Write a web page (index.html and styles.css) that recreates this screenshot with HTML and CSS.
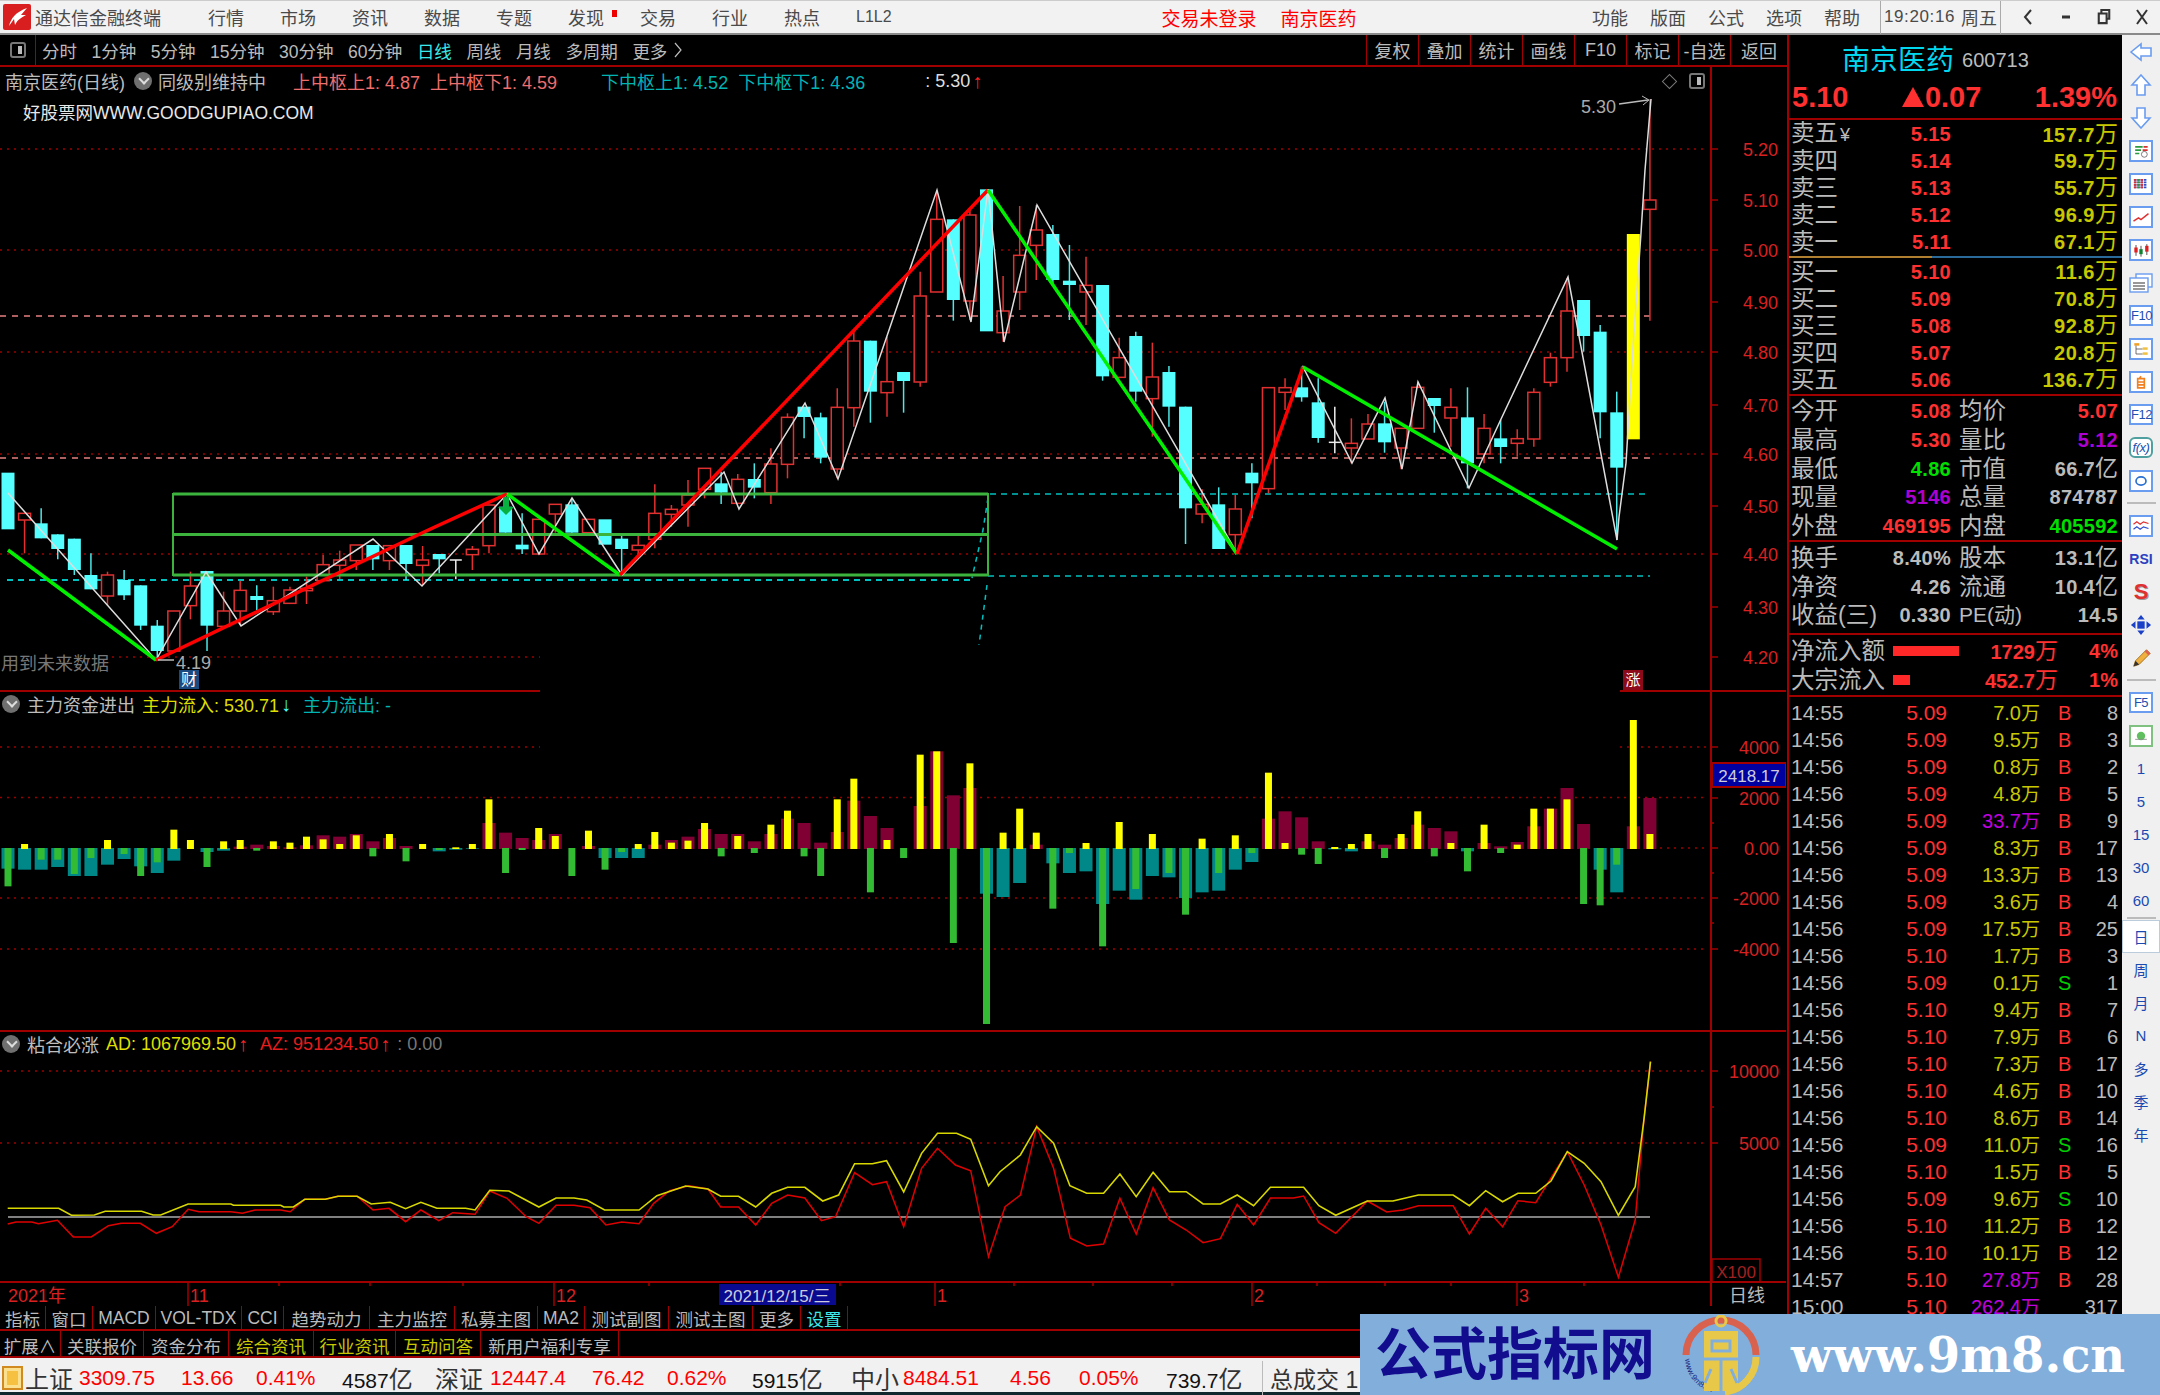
FILE: index.html
```html
<!DOCTYPE html>
<html lang="zh-CN">
<head>
  <meta charset="UTF-8" />
  <title>通达信金融终端 - 南京医药</title>
  <link rel="stylesheet" href="styles.css">
</head>
<body>

<!-- title bar -->
<div class="titlebar">
  <svg class="logo" viewBox="0 0 28 26"><rect width="28" height="26" rx="2" fill="#d81e1e"/><path d="M6 22 C8 14 13 8 24 4 L18 11 L23 11 C18 14 15 15 12 21 L11 15 Z" fill="#fff"/></svg>
  <span class="app-name">通达信金融终端</span>
  <nav class="menu">
    <span>行情</span><span>市场</span><span>资讯</span><span>数据</span><span>专题</span>
    <span class="has-dot">发现</span><span>交易</span><span>行业</span><span>热点</span><span class="l2">L1L2</span>
  </nav>
  <div class="login"><span>交易未登录</span><span>南京医药</span></div>
  <nav class="menu-right"><span>功能</span><span>版面</span><span>公式</span><span>选项</span><span>帮助</span></nav>
  <div class="clock"><span class="time">19:20:16</span><span>周五</span></div>
  <div class="win-btns">
    <svg viewBox="0 0 12 20"><path d="M9 3 L3 10 L9 17" fill="none" stroke="#333" stroke-width="2"/></svg>
    <svg viewBox="0 0 12 20"><path d="M2 10 H10" stroke="#333" stroke-width="3"/></svg>
    <svg viewBox="0 0 16 20"><path d="M5 5 V2 H14 V12 H11 M2 6 H11 V17 H2 Z" fill="none" stroke="#333" stroke-width="2.4"/></svg>
    <svg viewBox="0 0 14 20"><path d="M2 3 L12 17 M12 3 L2 17" stroke="#333" stroke-width="2"/></svg>
  </div>
</div>

<div class="workspace">
  <div class="left-col">
    <div class="toolbar">
      <div class="toggle-cell"><i class="toggle"></i></div>
      <div class="periods">
        <span>分时</span><span>1分钟</span><span>5分钟</span><span>15分钟</span><span>30分钟</span><span>60分钟</span>
        <span class="on">日线</span><span>周线</span><span>月线</span><span>多周期</span><span>更多</span>
        <svg class="more-arrow" viewBox="0 0 8 16"><path d="M1 1 L7 8 L1 15" fill="none" stroke="#bbb" stroke-width="1.2"/></svg>
      </div>
      <div class="tools">
        <span>复权</span><span>叠加</span><span>统计</span><span>画线</span><span>F10</span><span>标记</span><span>-自选</span><span>返回</span>
      </div>
    </div>

    <div class="chart">
      <svg id="plot" class="plot" viewBox="0 67 1786 1239"></svg>

      <div class="pane pane-main">
        <div class="legend">
          <span class="gray name">南京医药(日线)</span><i class="chev"></i><span class="gray">同级别维持中</span>
          <span class="salmon lg-a">上中枢上1: 4.87</span><span class="salmon lg-b">上中枢下1: 4.59</span>
          <span class="teal lg-c">下中枢上1: 4.52</span><span class="teal lg-b">下中枢下1: 4.36</span>
          <span class="white lg-d">: 5.30</span><span class="red-arrow">↑</span>
        </div>
        <div class="site-note">好股票网WWW.GOODGUPIAO.COM</div>
        <div class="pane-tools"><i class="diamond"></i><i class="toggle"></i></div>
        <div class="future-note">用到未来数据</div>
        <div class="tag-cai">财</div>
        <div class="tag-zhang">涨</div>
      </div>

      <div class="pane pane-flow">
        <div class="legend legend-sub">
          <i class="chev"></i><span class="gray">主力资金进出</span>
          <span class="yellow lg-e">主力流入: 530.71</span><span class="cyan-arrow">↓</span>
          <span class="teal lg-f">主力流出: -</span>
        </div>
      </div>

      <div class="pane pane-glue">
        <div class="legend legend-sub">
          <i class="chev"></i><span class="gray">粘合必涨</span>
          <span class="yellow lg-e">AD: 1067969.50</span><span class="red-arrow">↑</span>
          <span class="red lg-f">AZ: 951234.50</span><span class="red-arrow">↑</span>
          <span class="dim lg-e">: 0.00</span>
        </div>
      </div>
    </div>

    <div class="tabs tabs-a">
      <span>指标</span><span>窗口</span><span>MACD</span><span>VOL-TDX</span><span>CCI</span><span>趋势动力</span><span>主力监控</span>
      <span>私募主图</span><span>MA2</span><span>测试副图</span><span>测试主图</span><span>更多</span><span class="cyan">设置</span>
    </div>
    <div class="tabs tabs-b">
      <span>扩展∧</span><span>关联报价</span><span>资金分布</span><span class="olive">综合资讯</span><span class="olive">行业资讯</span><span class="olive">互动问答</span><span>新用户福利专享</span>
    </div>
  </div>

  <!-- quote panel -->
  <div class="quote">
    <div class="q-name"><span class="stock">南京医药</span><span class="code">600713</span></div>
    <div class="q-price"><span>5.10</span><span class="chg"><i class="tri"></i>0.07</span><span>1.39%</span></div>

    <div class="book">
      <div class="b-row"><span>卖五<em class="yen">¥</em></span><b>5.15</b><u>157.7<s>万</s></u></div>
      <div class="b-row"><span>卖四</span><b>5.14</b><u>59.7<s>万</s></u></div>
      <div class="b-row"><span>卖三</span><b>5.13</b><u>55.7<s>万</s></u></div>
      <div class="b-row"><span>卖二</span><b>5.12</b><u>96.9<s>万</s></u></div>
      <div class="b-row"><span>卖一</span><b>5.11</b><u>67.1<s>万</s></u></div>
    </div>
    <div class="book-split"></div>
    <div class="book buy">
      <div class="b-row"><span>买一</span><b>5.10</b><u>11.6<s>万</s></u></div>
      <div class="b-row"><span>买二</span><b>5.09</b><u>70.8<s>万</s></u></div>
      <div class="b-row"><span>买三</span><b>5.08</b><u>92.8<s>万</s></u></div>
      <div class="b-row"><span>买四</span><b>5.07</b><u>20.8<s>万</s></u></div>
      <div class="b-row"><span>买五</span><b>5.06</b><u>136.7<s>万</s></u></div>
    </div>

    <div class="stats stats-a">
      <div class="s-row"><span>今开</span><b class="up">5.08</b><span>均价</span><b class="up">5.07</b></div>
      <div class="s-row"><span>最高</span><b class="up">5.30</b><span>量比</span><b class="pur">5.12</b></div>
      <div class="s-row"><span>最低</span><b class="down">4.86</b><span>市值</span><b>66.7<s>亿</s></b></div>
      <div class="s-row"><span>现量</span><b class="pur">5146</b><span>总量</span><b>874787</b></div>
      <div class="s-row"><span>外盘</span><b class="up">469195</b><span>内盘</span><b class="down">405592</b></div>
    </div>
    <div class="stats stats-b">
      <div class="s-row"><span>换手</span><b>8.40%</b><span>股本</span><b>13.1<s>亿</s></b></div>
      <div class="s-row"><span>净资</span><b>4.26</b><span>流通</span><b>10.4<s>亿</s></b></div>
      <div class="s-row"><span>收益(三)</span><b>0.330</b><span class="pe">PE(动)</span><b>14.5</b></div>
    </div>
    <div class="flows">
      <div class="f-row"><span>净流入额</span><i><em class="fill" style="width:100%"></em></i><b>1729<s>万</s></b><b>4%</b></div>
      <div class="f-row"><span>大宗流入</span><i><em class="fill" style="width:25%"></em></i><b>452.7<s>万</s></b><b>1%</b></div>
    </div>

    <div class="trades">
      <div class="t-row"><span>14:55</span><b>5.09</b><u>7.0<s>万</s></u><em class="b">B</em><span class="n">8</span></div>
      <div class="t-row"><span>14:56</span><b>5.09</b><u>9.5<s>万</s></u><em class="b">B</em><span class="n">3</span></div>
      <div class="t-row"><span>14:56</span><b>5.09</b><u>0.8<s>万</s></u><em class="b">B</em><span class="n">2</span></div>
      <div class="t-row"><span>14:56</span><b>5.09</b><u>4.8<s>万</s></u><em class="b">B</em><span class="n">5</span></div>
      <div class="t-row"><span>14:56</span><b>5.09</b><u class="big">33.7<s>万</s></u><em class="b">B</em><span class="n">9</span></div>
      <div class="t-row"><span>14:56</span><b>5.09</b><u>8.3<s>万</s></u><em class="b">B</em><span class="n">17</span></div>
      <div class="t-row"><span>14:56</span><b>5.09</b><u>13.3<s>万</s></u><em class="b">B</em><span class="n">13</span></div>
      <div class="t-row"><span>14:56</span><b>5.09</b><u>3.6<s>万</s></u><em class="b">B</em><span class="n">4</span></div>
      <div class="t-row"><span>14:56</span><b>5.09</b><u>17.5<s>万</s></u><em class="b">B</em><span class="n">25</span></div>
      <div class="t-row"><span>14:56</span><b>5.10</b><u>1.7<s>万</s></u><em class="b">B</em><span class="n">3</span></div>
      <div class="t-row"><span>14:56</span><b>5.09</b><u>0.1<s>万</s></u><em class="g">S</em><span class="n">1</span></div>
      <div class="t-row"><span>14:56</span><b>5.10</b><u>9.4<s>万</s></u><em class="b">B</em><span class="n">7</span></div>
      <div class="t-row"><span>14:56</span><b>5.10</b><u>7.9<s>万</s></u><em class="b">B</em><span class="n">6</span></div>
      <div class="t-row"><span>14:56</span><b>5.10</b><u>7.3<s>万</s></u><em class="b">B</em><span class="n">17</span></div>
      <div class="t-row"><span>14:56</span><b>5.10</b><u>4.6<s>万</s></u><em class="b">B</em><span class="n">10</span></div>
      <div class="t-row"><span>14:56</span><b>5.10</b><u>8.6<s>万</s></u><em class="b">B</em><span class="n">14</span></div>
      <div class="t-row"><span>14:56</span><b>5.09</b><u>11.0<s>万</s></u><em class="g">S</em><span class="n">16</span></div>
      <div class="t-row"><span>14:56</span><b>5.10</b><u>1.5<s>万</s></u><em class="b">B</em><span class="n">5</span></div>
      <div class="t-row"><span>14:56</span><b>5.09</b><u>9.6<s>万</s></u><em class="g">S</em><span class="n">10</span></div>
      <div class="t-row"><span>14:56</span><b>5.10</b><u>11.2<s>万</s></u><em class="b">B</em><span class="n">12</span></div>
      <div class="t-row"><span>14:56</span><b>5.10</b><u>10.1<s>万</s></u><em class="b">B</em><span class="n">12</span></div>
      <div class="t-row"><span>14:57</span><b>5.10</b><u class="big">27.8<s>万</s></u><em class="b">B</em><span class="n">28</span></div>
      <div class="t-row"><span>15:00</span><b>5.10</b><u class="big">262.4<s>万</s></u><em class="b"></em><span class="n">317</span></div>
    </div>
  </div>

  <!-- right icon strip -->
  <div class="side">
    <div class="s-item"><svg viewBox="0 0 24 22"><path d="M2 11 L12 3 V7 H22 V15 H12 V19 Z" fill="#fff" stroke="#6a9cf0" stroke-width="1.6"/></svg></div>
    <div class="s-item"><svg viewBox="0 0 24 22"><path d="M12 1 L21 11 H16 V21 H8 V11 H3 Z" fill="#fff" stroke="#6a9cf0" stroke-width="1.6"/></svg></div>
    <div class="s-item"><svg viewBox="0 0 24 22"><path d="M12 21 L21 11 H16 V1 H8 V11 H3 Z" fill="#fff" stroke="#6a9cf0" stroke-width="1.6"/></svg></div>
    <div class="s-item"><svg class="box" viewBox="0 0 24 20"><path d="M5 5 H14 M5 9 H12 M5 13 H10" stroke="#2a9a40" stroke-width="2"/><path d="M15 5 H20 M14 9 H20" stroke="#d83030" stroke-width="2"/><circle cx="16" cy="14" r="3.5" fill="none" stroke="#666"/></svg></div>
    <div class="s-item"><svg class="box" viewBox="0 0 24 20"><path d="M5 4 V16 M9 4 V16 M13 4 V16 M17 4 V16" stroke="#2a50d0" stroke-width="3" stroke-dasharray="2 1"/><path d="M5 4 V16" stroke="#d83030" stroke-width="3" stroke-dasharray="2 1"/><path d="M13 4 V16" stroke="#d83030" stroke-width="3" stroke-dasharray="2 1"/><path d="M9 4 V16" stroke="#2a9a40" stroke-width="3" stroke-dasharray="2 1"/></svg></div>
    <div class="s-item"><svg class="box" viewBox="0 0 24 20"><path d="M3 15 L9 11 L12 13 L21 6" fill="none" stroke="#e03030" stroke-width="1.8"/></svg></div>
    <div class="s-item"><svg class="box" viewBox="0 0 24 20"><path d="M6 4 V17 M19 3 V16" stroke="#333"/><rect x="4" y="7" width="4" height="6" fill="#e02020"/><path d="M12 5 V18" stroke="#333"/><rect x="10" y="9" width="4" height="6" fill="#108030"/><rect x="17" y="5" width="4" height="7" fill="#e02020"/></svg></div>
    <div class="s-item"><svg viewBox="0 0 24 20"><rect x="7" y="1" width="16" height="13" fill="#fff" stroke="#6a9cf0" stroke-width="1.4"/><rect x="1" y="5" width="18" height="14" fill="#fff" stroke="#6a9cf0" stroke-width="1.4"/><path d="M4 10 H16 M4 13 H16 M4 16 H16" stroke="#777" stroke-width="1.4"/></svg></div>
    <div class="s-item"><span class="s-txt">F10</span></div>
    <div class="s-item"><svg class="box" viewBox="0 0 24 20"><rect x="4" y="3" width="6" height="3" fill="#f0a020"/><path d="M6 6 V16 H14 M6 10 H14" fill="none" stroke="#555"/><rect x="14" y="8" width="6" height="3" fill="#f0c040"/><rect x="14" y="14" width="6" height="3" fill="#f0c040"/></svg></div>
    <div class="s-item"><svg class="box" viewBox="0 0 24 20"><path d="M8 6 H16 V17 H8 Z M8 10 H16 M8 13.5 H16 M12 3 L10 6" fill="none" stroke="#f08020" stroke-width="2"/></svg></div>
    <div class="s-item"><span class="s-txt">F12</span></div>
    <div class="s-item"><span class="s-txt fx">f(x)</span></div>
    <div class="s-item"><svg class="box" viewBox="0 0 24 20"><ellipse cx="12" cy="10" rx="6" ry="5" fill="none" stroke="#2a70d0" stroke-width="2"/></svg></div>
    <div class="s-sep"></div>
    <div class="s-item"><svg class="box" viewBox="0 0 24 20"><path d="M3 8 L7 5 L11 8 L15 5 L21 7" fill="none" stroke="#e03030" stroke-width="1.5"/><path d="M3 14 L7 11 L11 14 L15 11 L21 13" fill="none" stroke="#3050d0" stroke-width="1.5"/></svg></div>
    <div class="s-item"><span class="s-rsi">RSI</span></div>
    <div class="s-item"><span class="s-s">S</span></div>
    <div class="s-item"><svg viewBox="0 0 24 24"><path d="M12 1 L16 6 H8 Z M12 23 L16 18 H8 Z M1 12 L6 8 V16 Z M23 12 L18 8 V16 Z" fill="#1a40c8"/><rect x="8" y="8" width="8" height="8" fill="#1a40c8"/></svg></div>
    <div class="s-item"><svg viewBox="0 0 24 24"><path d="M4 21 L6 15 L18 3 L22 7 L10 19 Z" fill="#f0b040" stroke="#a07020"/><path d="M18 3 L22 7 L20 9 L16 5 Z" fill="#e06050"/><path d="M4 21 L6 15 L10 19 Z" fill="#333"/></svg></div>
    <div class="s-sep"></div>
    <div class="s-item"><span class="s-txt">F5</span></div>
    <div class="s-item"><svg class="box green-box" viewBox="0 0 24 20"><circle cx="12" cy="10" r="5" fill="#60c060"/><path d="M5 14 H19" stroke="#888"/></svg></div>
    <div class="s-item s-num">1</div><div class="s-item s-num">5</div><div class="s-item s-num">15</div><div class="s-item s-num">30</div><div class="s-item s-num">60</div>
    <div class="s-sep s-thin"></div>
    <div class="s-item s-num s-on">日</div><div class="s-item s-num">周</div><div class="s-item s-num">月</div><div class="s-item s-num">N</div>
    <div class="s-item s-num">多</div><div class="s-item s-num">季</div><div class="s-item s-num">年</div>
  </div>
</div>

<!-- index strip -->
<div class="statusbar">
  <i class="st-icon"></i>
  <span class="st-name">上证</span><span class="st-up">3309.75</span><span class="st-up">13.66</span><span class="st-up">0.41%</span><span class="st-vol">4587<s>亿</s></span>
  <span class="st-name">深证</span><span class="st-up">12447.4</span><span class="st-up">76.42</span><span class="st-up">0.62%</span><span class="st-vol">5915<s>亿</s></span>
  <span class="st-name">中小</span><span class="st-up">8484.51</span><span class="st-up">4.56</span><span class="st-up">0.05%</span><span class="st-vol">739.7<s>亿</s></span>
  <span class="st-name st-total">总成交 1</span>
</div>

<!-- site banner over the corner -->
<div class="banner">
  <span class="ban-cn">公式指标网</span>
  <svg class="ban-logo" viewBox="0 0 80 80">
    <path d="M5 40 A35 35 0 0 1 75 40" fill="none" stroke="#d8624e" stroke-width="7"/>
    <path d="M75 42 A35 35 0 0 1 44 77" fill="none" stroke="#e8c848" stroke-width="7"/>
    <defs><path id="ban-arc" d="M4 44 A36 36 0 0 0 36 78"/></defs>
    <text class="ban-arc-text"><textPath href="#ban-arc">www.9m8.cn</textPath></text>
    <circle cx="40" cy="6" r="5" fill="none" stroke="#e8c848" stroke-width="3"/>
    <path d="M23 16 H57 V76 H23 Z" fill="#e8c848"/>
    <path d="M31 26 H49 V36 H31 Z M23 44 H57 M40 44 V76 M30 54 L24 68 M50 54 L56 68" fill="none" stroke="#82aedb" stroke-width="3"/>
  </svg>
  <span class="ban-url">www.9m8.cn</span>
</div>

<script src="chart.js"></script>
</body>
</html>
```

FILE: styles.css
```css
* { box-sizing: border-box; }
html, body { margin: 0; padding: 0; }
body {
  width: 2160px;
  height: 1395px;
  overflow: hidden;
  position: relative;
  background: #000;
  font-family: "Liberation Sans", "Noto Sans CJK SC", sans-serif;
  font-size: 18px;
  color: #bbb;
}
em, u, s, i { font-style: normal; text-decoration: none; }

/* title bar */
.titlebar {
  height: 35px;
  display: flex;
  align-items: center;
  background: #f2f2f2;
  border-top: 1px solid #ccc;
  border-bottom: 2px solid #8a8a8a;
  color: #4a4a4a;
}
.logo { width: 28px; height: 26px; margin-left: 3px; flex: none; }
.app-name { margin-left: 4px; }
.menu { display: flex; align-items: center; gap: 36px; margin-left: 47px; }
.l2 { font-size: 16px; }
.has-dot { position: relative; }
.has-dot::after {
  content: "";
  position: absolute;
  left: 44px;
  top: 6px;
  width: 5px;
  height: 7px;
  background: #e00;
}
.login { display: flex; gap: 24px; margin-left: 270px; color: #f00; font-size: 19px; }
.menu-right { display: flex; gap: 22px; margin-left: auto; }
.clock {
  display: flex;
  gap: 6px;
  align-items: center;
  height: 33px;
  margin-left: 20px;
  padding: 0 3px 0 3px;
  border-left: 1px solid #aaa;
  border-right: 1px solid #aaa;
}
.time { letter-spacing: 0.6px; font-size: 17px; }
.win-btns { display: flex; align-items: center; gap: 24px; margin: 0 11px 0 20px; }
.win-btns svg { height: 20px; width: 14px; }

.workspace { display: flex; height: 1323px; }
.left-col { width: 1789px; flex: none; border-right: 2px solid #a00000; }

/* period toolbar */
.toolbar {
  height: 32px;
  display: flex;
  align-items: stretch;
  border-bottom: 2px solid #a00000;
}
.toggle-cell {
  width: 36px;
  flex: none;
  display: flex;
  align-items: center;
  justify-content: center;
  border-right: 1px solid #a00000;
}
.toggle {
  display: block;
  width: 16px;
  height: 16px;
  border: 2px solid #777;
  border-radius: 3px;
  position: relative;
}
.toggle::after {
  content: "";
  position: absolute;
  right: 2px;
  top: 2px;
  bottom: 2px;
  width: 4px;
  background: #bbb;
}
.periods { display: flex; align-items: center; gap: 14.5px; margin-left: 6px; font-size: 17.5px; }
.periods .on { color: #3ce8e8; }
.more-arrow { width: 8px; height: 16px; margin-left: -8px; }
.tools { margin-left: auto; display: grid; grid-template-columns: repeat(7, 52px) 57px; }
.tools span {
  display: flex;
  align-items: center;
  justify-content: center;
  border-left: 1px solid #a00000;
}

/* chart */
.chart { height: 1239px; position: relative; overflow: hidden; }
.plot { position: absolute; left: 0; top: 0; width: 1786px; height: 1239px; font-family: "Liberation Sans", "Noto Sans CJK SC", sans-serif; }
.pane { position: relative; }
.pane-main { height: 624px; }
.pane-flow { height: 340px; }
.pane-glue { height: 251px; }
.legend { display: flex; align-items: center; height: 28px; padding-left: 5px; font-size: 18px; white-space: nowrap; }
.legend-sub { padding-left: 2px; height: 26px; }
.name { margin-right: 9px; }
.chev {
  display: block;
  width: 18px;
  height: 18px;
  flex: none;
  margin-right: 6px;
  border-radius: 50%;
  background: #6f6f6f;
  position: relative;
}
.chev::after {
  content: "";
  position: absolute;
  left: 5.5px;
  top: 3px;
  width: 6px;
  height: 6px;
  border-right: 2px solid #ddd;
  border-bottom: 2px solid #ddd;
  transform: rotate(45deg);
}
.legend-sub .chev { margin-right: 7px; }
.gray { color: #bdbdbd; }
.salmon { color: #ee6e6e; }
.teal { color: #00b4b4; }
.yellow { color: #dede00; }
.red { color: #e81c1c; }
.dim { color: #777; }
.white { color: #ddd; }
.lg-a { margin-left: 27px; }
.lg-b { margin-left: 10px; }
.lg-c { margin-left: 44px; }
.lg-d { margin-left: 60px; }
.lg-e { margin-left: 7px; }
.lg-f { margin-left: 12px; }
.red-arrow { color: #f22; font-weight: bold; font-size: 20px; margin-left: 2px; }
.cyan-arrow { color: #4ff; font-weight: bold; font-size: 20px; margin-left: 2px; }
.site-note { position: absolute; left: 23px; top: 32px; color: #e8e8e8; font-size: 17.5px; }
.pane-tools { position: absolute; left: 1664px; top: 6px; display: flex; gap: 14px; align-items: center; }
.diamond { display: block; width: 11px; height: 11px; border: 1px solid #777; transform: rotate(45deg); }
.future-note { position: absolute; left: 1px; top: 582px; color: #777; font-size: 18px; }
.tag-cai {
  position: absolute;
  left: 179px;
  top: 603px;
  width: 20px;
  height: 19px;
  background: #1b4a80;
  color: #fff;
  font-size: 16px;
  line-height: 19px;
  text-align: center;
}
.tag-zhang {
  position: absolute;
  left: 1623px;
  top: 603px;
  width: 20px;
  height: 20px;
  background: #8c0a1a;
  color: #fff;
  font-size: 15px;
  line-height: 20px;
  text-align: center;
}

/* bottom tab rows */
.tabs { display: grid; border-bottom: 2px solid #a00000; font-size: 17.5px; }
.tabs span {
  display: flex;
  align-items: center;
  justify-content: center;
  white-space: nowrap;
  border-right: 1px solid #a00000;
}
.tabs-a { grid-template-columns: 46px 47px 63px 86px 42px 86px 85px 83px 47px 84px 84px 48px 47px; height: 25px; }
.tabs-b { grid-template-columns: 61px 83px 85px 85px 82px 85px 138px; height: 27px; }
.tabs-b span { padding-top: 2px; }
.tabs .cyan { color: #3ce8e8; }
.tabs .olive { color: #c8c800; }

/* quote panel */
.quote { width: 333px; flex: none; padding: 0 4px 0 2px; overflow: hidden; }
.q-name { height: 45px; display: flex; align-items: center; padding-left: 51px; }
.stock { color: #00d8f0; font-size: 28px; }
.code { color: #bbb; font-size: 20px; margin-left: 8px; margin-top: 6px; }
.q-price {
  height: 40px;
  margin: 0 -4px 0 -2px;
  padding: 0 5px 4px 3px;
  display: flex;
  align-items: center;
  justify-content: space-between;
  border-bottom: 2px solid #a00000;
  color: #ff3030;
  font-size: 29px;
  font-weight: bold;
}
.chg { display: flex; align-items: center; }
.tri {
  display: block;
  width: 0;
  height: 0;
  margin-right: 1px;
  border-left: 11px solid transparent;
  border-right: 11px solid transparent;
  border-bottom: 20px solid #ff3030;
}
.b-row, .s-row, .f-row, .t-row { display: grid; align-items: center; }
.b-row { height: 27px; grid-template-columns: 60px 100px 1fr; font-size: 23.5px; line-height: 27px; }
.yen { font-size: 18px; margin-left: 2px; }
.b-row b, .s-row b { font-size: 20px; letter-spacing: 0.3px; text-align: right; color: #ff3030; }
.b-row u { text-align: right; color: #c8c800; font-size: 20px; font-weight: bold; letter-spacing: 0.5px; }
s { font-size: 23px; font-weight: normal; letter-spacing: 0; }
.book-split { height: 2px; margin: 1px -4px 0 -2px; background: linear-gradient(to right, #b08030 43%, #2a6a9a 43%); }
.buy { border-bottom: 2px solid #a00000; margin: 0 -4px 0 -2px; padding: 0 4px 1px 2px; }
.stats { margin: 0 -4px 0 -2px; padding: 1px 4px 0 2px; border-bottom: 2px solid #a00000; }
.stats-b { padding-bottom: 3px; }
.s-row { height: 28.7px; grid-template-columns: 60px 100px 62px 1fr; font-size: 23.5px; line-height: 28px; }
.s-row span { white-space: nowrap; }
.s-row span:nth-child(3) { padding-left: 8px; }
.s-row .pe { font-size: 21px; }
.s-row b { color: #bbb; white-space: nowrap; }
.s-row .up { color: #ff3030; }
.s-row .down { color: #00e000; }
.s-row .pur { color: #b000d0; }
.flows { margin: 0 -4px 0 -2px; padding: 2px 4px 0 2px; border-bottom: 2px solid #a00000; }
.f-row { height: 29px; grid-template-columns: 102px 66px 99px 1fr; font-size: 23.5px; line-height: 28px; }
.f-row span { white-space: nowrap; }
.f-row b { color: #ff3030; font-size: 20px; text-align: right; white-space: nowrap; }
.fill { display: block; height: 10px; background: #ff2828; }
.trades { padding-top: 3px; }
.t-row { height: 27px; grid-template-columns: 60px 96px 93px 30px 1fr; font-size: 21px; line-height: 26px; }
.t-row b { font-weight: normal; text-align: right; color: #ff3030; }
.t-row u { text-align: right; color: #c8c800; font-size: 20px; white-space: nowrap; }
.t-row u.big { color: #c000e0; }
.t-row s { font-size: 19px; }
.t-row em { text-align: center; font-size: 20px; padding-left: 18px; }
.t-row .b { color: #ff3030; }
.t-row .g { color: #00d000; }
.t-row .n { text-align: right; color: #bbb; font-size: 20px; }

/* icon strip */
.side { flex: 1; background: #f0f0f0; overflow: hidden; }
.s-item { height: 33px; display: flex; align-items: center; justify-content: center; }
.s-item svg { width: 24px; height: 22px; }
.s-item svg.box { background: #fff; border: 2px solid #6a9cf0; }
.s-item svg.green-box { border-color: #80c080; }
.s-sep { height: 12px; position: relative; }
.s-sep::after { content: ""; position: absolute; left: 5px; right: 4px; top: 5px; height: 2px; background: #bbb; }
.s-thin { height: 3px; }
.s-thin::after { top: 0; }
.s-txt {
  width: 24px;
  height: 21px;
  border: 2px solid #6a9cf0;
  background: #fff;
  color: #2050b0;
  font-size: 13px;
  line-height: 17px;
  letter-spacing: -0.5px;
  text-align: center;
  white-space: nowrap;
}
.fx { font-style: italic; border-color: #50a0a0; border-radius: 6px; }
.s-rsi { color: #2a40c0; font-size: 14px; font-weight: bold; }
.s-s { color: #e03030; font-size: 22px; font-weight: bold; text-shadow: 1px 1px 0 #999; }
.s-num { color: #1a4ab0; font-size: 15px; }
.s-on { background: #fff; border: 1px solid #bcd; }

/* index strip */
.statusbar {
  height: 37px;
  padding-top: 2px;
  background: #f1f1f1;
  border-bottom: 3px solid #10282e;
  display: grid;
  grid-template-columns: 25px 54px 102px 75px 86px 93px 55px 102px 75px 85px 99px 52px 107px 69px 87px 96px 1fr;
  align-items: center;
  white-space: nowrap;
}
.st-icon {
  display: block;
  width: 21px;
  height: 24px;
  margin-left: 2px;
  background: #f6c040;
  border: 2px solid #d08a20;
  box-shadow: inset 0 0 0 3px #fbe090;
}
.st-name { font-size: 24px; color: #333; }
.st-up { color: #f00; font-size: 21px; }
.st-vol { color: #111; font-size: 21px; }
.st-vol s { font-size: 24px; color: #333; }
.st-total { border-left: 1px solid #bbb; padding-left: 7px; font-size: 23px; }

/* site banner */
.banner {
  position: absolute;
  left: 1360px;
  top: 1314px;
  width: 800px;
  height: 81px;
  display: flex;
  align-items: center;
  background: #82aedb;
  overflow: hidden;
}
.ban-cn {
  margin-left: 15px;
  color: #120c8e;
  font-size: 56px;
  font-weight: bold;
  line-height: 1;
  white-space: nowrap;
}
.ban-logo { width: 80px; height: 80px; margin-left: 26px; flex: none; }
.ban-arc-text { font-size: 8px; fill: #1a2a80; }
.ban-url {
  margin-left: 30px;
  color: #fff;
  font-family: "DejaVu Serif", serif;
  font-size: 48px;
  font-weight: bold;
  white-space: nowrap;
}
```

FILE: chart.js
```js
const plot = document.getElementById('plot');
let out = '';

const STEP = 16.585;
const barX = i => 8 + i * STEP;

function line(x1, y1, x2, y2, color, width, dash) {
  out += `<line x1="${x1}" y1="${y1}" x2="${x2}" y2="${y2}" stroke="${color}" stroke-width="${width}"${dash ? ` stroke-dasharray="${dash}"` : ''}/>`;
}
function poly(points, color, width, dash) {
  const d = points.map(p => p[0].toFixed(1) + ',' + p[1].toFixed(1)).join(' ');
  out += `<polyline points="${d}" fill="none" stroke="${color}" stroke-width="${width}"${dash ? ` stroke-dasharray="${dash}"` : ''}/>`;
}
function label(x, y, txt, color, size, anchor) {
  out += `<text x="${x}" y="${y + 1}" fill="${color}" font-size="${size}" text-anchor="${anchor || 'start'}" dominant-baseline="central">${txt}</text>`;
}

// y values below were measured on 3x crops, so y = top + v / 3
const scale = (top, list) => list.map(r => [r[0], top + r[1] / 3, top + r[2] / 3, top + r[3] / 3, top + r[4] / 3]);

const candles = [
  ...scale(460, [
    ['c',38,208,38,208],['r',160,180,160,280],['c',190,235,145,235],['c',223,267,223,298],['c',236,330,236,345],
    ['c',345,388,280,388],['r',345,408,335,435],['c',360,406,330,420],['c',376,497,376,510],['c',497,573,480,600],
    ['r',453,573,453,573],['r',378,437,335,478],['c',333,497,333,573],['r',453,499,395,499],['r',391,453,362,495],
    ['c',408,420,376,450],['r',422,455,380,465],['r',390,430,380,430],['r',385,392,350,432],['r',314,362,285,362],
    ['r',300,316,272,357],['r',255,302,255,330],['c',255,298,255,330],['r',257,302,257,330],['c',255,312,255,360],
    ['r',300,316,258,375],['c',282,298,282,340],['w',300,302,300,358],['r',268,284,258,330],['r',135,257,135,280],
    ['c',140,218,105,218],['c',254,268,160,282],['r',178,282,178,282],['r',133,162,133,218],['c',133,218,115,218],
    ['r',178,218,178,218],['c',178,254,178,254],['c',236,267,225,345],['r',256,270,225,290],['r',160,238,73,265],
    ['r',148,163,135,200],['r',105,135,60,200]
  ]),
  ...scale(170, [
    ['r',895,958,895,985],['c',940,968,905,1002],['r',928,1000,912,1000],['c',927,953,880,985],['r',882,968,835,1002],
    ['r',742,883,730,925],['c',710,741,710,805],['c',742,863,728,880],['r',712,897,655,925],['r',513,713,480,770],
    ['c',512,665,512,758],['r',635,668,500,740],['c',606,633,606,728],['r',378,636,305,650],['r',148,366,60,366],
    ['c',148,390,148,452],['r',135,393,115,450],['c',58,484,58,484],['r',423,488,318,515],['r',256,366,108,420],
    ['r',180,226,105,330],['c',192,330,165,345],['c',332,345,225,450],['r',346,366,260,465],['c',345,619,345,632],
    ['r',563,622,503,622],['c',498,665,485,695],['r',621,686,518,800],['c',606,710,588,770],['c',710,1015,710,1122],
    ['r',1003,1032,958,1060],['c',1003,1137,952,1137],['r',1017,1094,975,1150],['c',908,940,880,1045],['r',653,956,653,970],
    ['r',653,667,625,720]
  ]),
  ...scale(80, [
    ['c',922,952,860,965],['c',967,1074,895,1088],['w',1087,1090,980,1120],['r',1090,1104,1015,1150],['r',1032,1077,1002,1077],
    ['c',1030,1087,965,1118],['r',1045,1104,1045,1168],['r',922,1045,905,1045],['c',954,978,954,1058],['r',982,1014,925,1100],
    ['c',1012,1150,922,1225],['r',1045,1122,1002,1150],['c',1075,1101,1020,1150],['r',1076,1090,1048,1130],['r',937,1077,925,1100],
    ['r',833,907,818,920],['r',693,833,595,875],['c',660,768,660,815],['c',755,997,735,1075],['c',997,1163,935,1380],
    ['y',462,1078,462,1078],['r',360,388,58,722]
  ])
];

// [wide, narrow] bar heights in crop units, positive is up
const flow = [
  [-62,-115],[-65,12],[-65,-35],[-57,-35],[-84,-78],[-84,-30],[-50,24],[-33,-18],[-55,-84],[-75,-43],
  [-38,55],[0,24],[-12,-57],[-8,20],[4,24],[10,-8],[6,20],[2,16],[8,34],[38,26],
  [34,12],[42,38],[20,-25],[30,42],[6,-40],[0,12],[-10,-6],[-5,2],[-2,12],[75,146],
  [46,-75],[30,-6],[24,60],[42,36],[0,-84],[6,52],[-30,-65],[-30,-12],[-30,12],[10,48],
  [24,16],[34,22],[57,75],[42,-25],[42,36],[20,-15],[42,70],[88,112],[75,-25],[16,-84],
  [48,146],[142,208],[96,-133],[60,24],[0,-30],[126,280],[290,290],[158,-285],[180,254],[-137,-528],
  [-147,46],[-105,118],[10,46],[-46,-182],[-75,-15],[-70,15],[-168,-295],[-128,78],[-155,-123],[-84,42],
  [-88,-75],[-150,-200],[-133,28],[-128,-75],[-65,38],[-42,-15],[88,226],[110,15],[92,-20],[20,-48],
  [-4,3],[-10,12],[20,42],[10,-30],[30,42],[70,110],[60,-25],[50,15],[-10,-70],[15,70],
  [5,-15],[18,10],[65,118],[118,118],[180,146],[72,-168],[-65,-172],[-133,-50],[65,384],[150,42]
];

const AXIS = 1711, RED = '#a00000', DOT = '2 5';

// ---- grid and separators
[149, 250, 352, 454, 554].forEach(y => line(0, y, 1708, y, '#9a0000', 1.5, DOT));
line(112, 657, 540, 657, '#9a0000', 1.5, DOT);
line(0, 691, 540, 691, RED, 2);
line(1620, 691, 1786, 691, RED, 2);
line(0, 1031, 1786, 1031, RED, 2);
line(0, 1282, 1786, 1282, RED, 2);
line(AXIS, 67, AXIS, 1306, RED, 2);

// price axis
const prices = [['5.20',149],['5.10',200],['5.00',250],['4.90',302],['4.80',352],['4.70',405],['4.60',454],['4.50',506],['4.40',554],['4.30',607],['4.20',657]];
prices.forEach(p => {
  line(AXIS, p[1], AXIS + 7, p[1], RED, 1.5);
  label(1778, p[1], p[0], '#d82020', 18, 'end');
});

// zone lines
line(0, 316, 1650, 316, '#e88080', 1.5, '6 6');
line(0, 458, 1650, 458, '#e88080', 1.5, '6 6');
line(7, 580, 972, 580, '#00c0c0', 2, '6 5');
line(990, 494, 1650, 494, '#00c0c0', 1.5, '6 5');
line(988, 576, 1650, 576, '#00c0c0', 1.5, '6 5');
poly([[988, 498], [983, 530], [972, 578]], '#00c0c0', 1.5, '5 5');
poly([[987, 585], [979, 645]], '#00c0c0', 1.5, '5 5');

// candles
candles.forEach((c, i) => {
  const x = barX(i);
  const colors = { r: '#e03030', c: '#4ce8e8', w: '#eee', y: '#ffff00' };
  const col = colors[c[0]];
  if (c[3] < c[1] || c[4] > c[2]) line(x, c[3], x, c[4], col, 1.5);
  if (c[0] === 'w') {
    line(x - 6, c[1], x + 6, c[1], col, 1.5);
  } else if (c[0] === 'r') {
    out += `<rect x="${x - 6}" y="${c[1]}" width="12" height="${c[2] - c[1]}" fill="#000" stroke="${col}" stroke-width="1.5"/>`;
  } else {
    const bg = c[0] === 'c' ? '#55ffff' : col;
    out += `<rect x="${x - 6.5}" y="${c[1]}" width="13" height="${c[2] - c[1]}" fill="${bg}"/>`;
  }
});

// central box
const BOX = '#3cb33c';
out += `<rect x="173" y="494" width="815" height="81" fill="none" stroke="${BOX}" stroke-width="2"/>`;
line(173, 494, 988, 494, BOX, 3);
line(173, 534.5, 988, 534.5, BOX, 3);
line(173, 575, 988, 575, BOX, 3);

// thin zigzag
poly([[8,493],[156,660],[206,572],[241,626],[373,539],[422,586],[507,494],[539,554],[572,498],[622,575],
  [724,472],[739,509],[805,403],[838,479],[937,190],[971,322],[988,189],[1004,342],[1037,205],[1237,553],
  [1303,367],[1352,463],[1385,398],[1402,469],[1418,382],[1469,488],[1502,417],[1568,277],[1617,540],
  [1619,517],[1626,463],[1633,347],[1641,233],[1645,170],[1651,99]], '#ddd', 1.5);

// thick zigzag
const THICK = 3.5;
poly([[8,550],[156,660]], '#00f000', THICK);
poly([[156,660],[424,532],[507,494]], '#f00', THICK);
poly([[507,494],[620,575]], '#00f000', THICK);
poly([[620,575],[988,190]], '#f00', THICK);
poly([[988,190],[1237,554]], '#00f000', THICK);
poly([[1237,554],[1303,367]], '#f00', THICK);
poly([[1303,367],[1617,549]], '#00f000', THICK);

// signal arrow
out += '<path d="M503 497 H509 V507 H514 L506 515 L498 507 H503 Z" fill="#08b040"/>';

// price notes
label(1581, 106, '5.30', '#aaa', 18);
poly([[1619,104],[1648,100]], '#bbb', 1.5);
poly([[1642,96],[1649,100],[1643,105]], '#bbb', 1);
poly([[158,660],[174,660]], '#bbb', 1.5);
label(176, 662, '4.19', '#aaa', 18);

// ---- flow pane
[797.5, 898, 949].forEach(y => line(0, y, 1708, y, '#9a0000', 1.5, DOT));
line(0, 747, 540, 747, '#9a0000', 1.5, DOT);
line(1620, 747, 1708, 747, '#9a0000', 1.5, DOT);
line(1660, 848, 1708, 848, '#9a0000', 1.5, DOT);
const BASE = 848;
flow.forEach((f, i) => {
  const x = barX(i);
  const bar = (h, w, up, dn) => {
    if (!h) return;
    const px = Math.abs(h) / 3;
    const y = h > 0 ? BASE - px : BASE;
    out += `<rect x="${x - w / 2}" y="${y}" width="${w}" height="${px + (h > 0 ? 1 : 0)}" fill="${h > 0 ? up : dn}"/>`;
  };
  bar(f[0], 13, '#800033', '#008888');
  bar(f[1], 7, '#ffff00', '#33bb33');
});
[['4000',747],['2000',798],['0.00',848],['-2000',898],['-4000',949]].forEach(p => {
  line(AXIS, p[1], AXIS + 7, p[1], RED, 1.5);
  label(1779, p[1], p[0], '#d82020', 18, 'end');
});
[823, 873, 923].forEach(y => line(AXIS, y, AXIS + 3, y, RED, 1.5));
out += `<rect x="1712" y="763" width="74" height="24" fill="#0000a0" stroke="${RED}" stroke-width="2"/>`;
label(1749, 775, '2418.17', '#ccd', 17, 'middle');

// ---- glue pane
const pts = (x0, kx, list) => list.map(p => [x0 + p[0] / kx, 1020 + p[1] / 3]);
[1071, 1143].forEach(y => line(0, y, 1708, y, '#9a0000', 1.5, DOT));
line(8, 1217, 1650, 1217, '#808080', 2);

poly([
  ...pts(0, 1.568, [[12,612],[25,606],[50,606],[60,611],[90,601],[115,651],[143,651],[170,617],[190,610],[220,610],[245,640],[270,620],[295,568],[312,575],[362,575],[380,580],[400,570],[440,570],[455,575],[478,538],[510,538],[530,529],[560,529],[585,570],[610,565],[636,605],[660,570],[688,602],[710,578],[745,583],[768,513],[795,535],[825,590],[845,610],[872,556],[900,556],[925,563],[950,615],[975,606],[1002,611],[1025,550],[1050,512],[1080,497],[1110,507],[1130,561],[1158,561],[1185,615],[1210,550],[1235,525],[1262,534],[1288,602],[1310,590],[1340,458],[1368,494],[1390,485],[1417,620],[1445,445],[1470,385],[1498,435],[1522,452],[1550,710]]),
  ...pts(1000, 1.96, [[0,605],[10,560],[40,525],[72,320],[105,445],[138,655],[170,678],[203,672],[235,535],[267,642],[300,503],[332,600],[365,630],[398,668],[432,656],[465,553],[497,615],[530,534],[575,534],[595,528],[625,608],[658,640],[720,543],[758,576],[790,570],[820,557],[888,557],[920,642],[952,565],[985,620],[1015,542],[1050,548],[1112,395],[1145,495],[1178,615],[1212,772],[1245,600],[1262,300],[1275,125]])
], '#e00000', 1.5);
poly([
  ...pts(0, 1.568, [[12,565],[92,565],[112,586],[148,585],[165,574],[222,574],[240,585],[252,585],[295,552],[362,552],[366,556],[440,556],[445,561],[460,561],[478,538],[510,538],[530,529],[560,529],[582,552],[612,547],[636,566],[660,547],[685,565],[730,565],[745,570],[768,511],[798,513],[845,561],[872,534],[900,534],[920,540],[948,570],[1002,570],[1030,527],[1075,498],[1110,507],[1130,529],[1158,529],[1185,561],[1210,520],[1235,502],[1262,502],[1290,543],[1315,525],[1340,431],[1368,431],[1390,422],[1417,516],[1445,400],[1470,340],[1500,340],[1522,358],[1550,497]]),
  ...pts(1000, 1.96, [[0,455],[40,405],[72,320],[105,370],[137,497],[170,520],[203,520],[235,462],[267,530],[300,457],[332,515],[365,515],[398,552],[432,552],[465,525],[497,557],[530,502],[595,502],[625,557],[658,586],[720,543],[770,543],[820,525],[888,525],[920,557],[952,512],[985,545],[1015,520],[1050,520],[1080,483],[1112,395],[1145,430],[1178,485],[1212,586],[1245,500],[1262,300],[1275,125]])
], '#d8d800', 1.6);
[['10000',1071],['5000',1143]].forEach(p => {
  line(AXIS, p[1], AXIS + 7, p[1], RED, 1.5);
  label(1779, p[1], p[0], '#d82020', 18, 'end');
});
line(AXIS, 1107, AXIS + 3, 1107, RED, 1.5);
out += `<rect x="1712" y="1259" width="48" height="23" fill="none" stroke="${RED}" stroke-width="1.5"/>`;
label(1736, 1271, 'X100', '#a02020', 17, 'middle');

// ---- time axis
[[188,'11'],[554,'12'],[935,'1'],[1252,'2'],[1517,'3']].forEach(t => {
  line(t[0], 1282, t[0], 1306, RED, 1.5);
  label(t[0] + 2, 1295, t[1], '#d82020', 18);
});
label(8, 1295, '2021年', '#d82020', 18);
[279, 370, 463, 649, 840, 1014, 1093, 1172, 1317, 1385, 1451, 1584].forEach(x => line(x, 1282, x, 1286, RED, 1.5));
out += '<rect x="719" y="1284" width="117" height="21" fill="#0a0a90"/>';
label(777, 1295, '2021/12/15/三', '#ccd', 17, 'middle');
label(1747, 1295, '日线', '#bbb', 18, 'middle');

plot.innerHTML = out;
```
